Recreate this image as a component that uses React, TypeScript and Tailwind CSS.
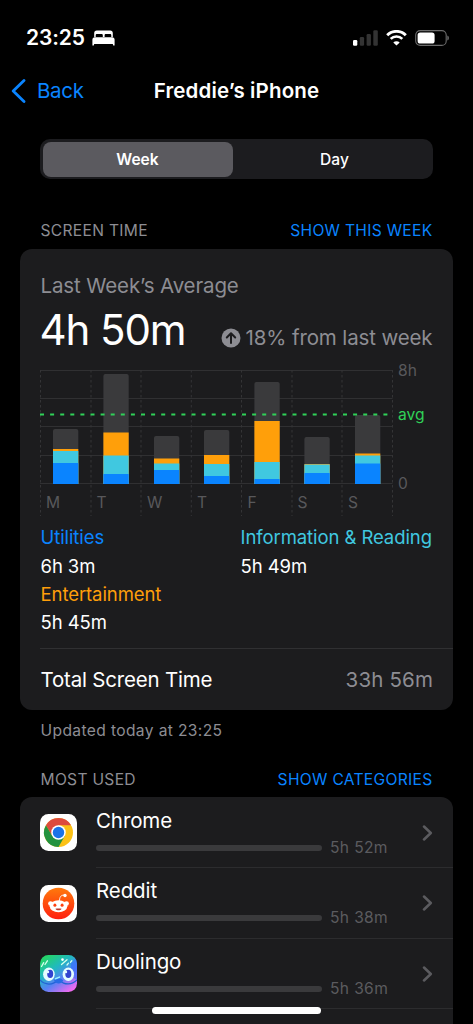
import { ReactNode } from 'react';

interface DayUsage {
  label: string;
  x: number;
  // y of the top edge of every segment, the bar stands on BASELINE
  other: number;
  entertainment: number;
  reading: number;
  utilities: number;
}

const BASELINE = 114;

const days: DayUsage[] = [
  { label: 'M', x: 13, other: 59, entertainment: 79, reading: 81, utilities: 93 },
  { label: 'T', x: 63.4, other: 4, entertainment: 62.5, reading: 85.5, utilities: 104 },
  { label: 'W', x: 114, other: 66, entertainment: 88.5, reading: 93.5, utilities: 100 },
  { label: 'T', x: 164, other: 60, entertainment: 85, reading: 94, utilities: 106 },
  { label: 'F', x: 214.4, other: 12, entertainment: 51, reading: 92, utilities: 109 },
  { label: 'S', x: 264.4, other: 67, entertainment: 94, reading: 94.5, utilities: 103 },
  { label: 'S', x: 315, other: 45, entertainment: 83.5, reading: 85.5, utilities: 93.5 },
];

function StatusBar() {
  return (
    <div className="flex h-[54px] items-end justify-between pr-[24px] pl-[26px] text-white">
      <div className="flex h-8 items-center gap-[7px]">
        <span className="text-[21px] font-semibold tracking-[-0.100px]">23:25</span>
        <svg width="23" height="16" viewBox="0 0 23 16" fill="currentColor">
          <path d="M2.200 7V3.200C2.200 1.500 3.100.6 4.800.6h13.400c1.700 0 2.600.9 2.600 2.600V7h-1.500V5.400c0-.9-.5-1.400-1.400-1.400h-3.900c-.9 0-1.400.5-1.400 1.400V7h-1.800V5.400c0-.9-.5-1.400-1.400-1.400H5.100c-.9 0-1.400.5-1.400 1.400V7z" />
          <path d="M.4 15.600V9.800C.4 8.200 1.300 7.300 2.900 7.300h17.200c1.600 0 2.500.9 2.500 2.500v5.800h-1.400l-.4-1.600H2.200l-.4 1.600z" />
        </svg>
      </div>
      <div className="flex h-8 items-center">
        <svg width="25" height="16" viewBox="0 0 25 16">
          <rect x="0" y="10" width="4.300" height="5.700" rx="1.200" fill="#fff" />
          <rect x="6.800" y="7" width="4.300" height="8.700" rx="1.200" fill="#333" />
          <rect x="13.600" y="4" width="4.300" height="11.700" rx="1.200" fill="#333" />
          <rect x="20.300" y="0.300" width="4.500" height="15.400" rx="1.200" fill="#333" />
        </svg>
        <svg className="ml-[8px]" width="21" height="16" viewBox="0 0 21 16" fill="none" stroke="#fff">
          <path d="M1.200 5.200a13.200 13.200 0 0 1 18.600 0" strokeWidth="2.900" />
          <path d="M4.700 8.900a8.200 8.200 0 0 1 11.600 0" strokeWidth="2.700" />
          <path d="M10.500 15.600L7.300 12.500a4.600 4.600 0 0 1 6.400 0z" fill="#fff" stroke="none" />
        </svg>
        <svg className="ml-[8px]" width="34" height="16" viewBox="0 0 34 16">
          <rect x="0.700" y="0.600" width="30.500" height="14.800" rx="4.500" fill="none" stroke="#6b6b6b" strokeWidth="1.100" />
          <rect x="2.600" y="2.500" width="17" height="11" rx="2.600" fill="#fff" />
          <path d="M32.300 5.600c1.200.5 1.600 1.300 1.600 2.400s-.4 1.900-1.600 2.400z" fill="#6b6b6b" />
        </svg>
      </div>
    </div>
  );
}

function NavBar() {
  return (
    <div className="grid h-[75px] grid-cols-[120px_1fr_120px] items-center">
      <button className="flex items-center gap-[11px] pl-[11px] text-[#0a84ff]">
        <svg className="-mt-[2px]" width="15" height="24" viewBox="0 0 15 24" fill="none" stroke="currentColor" strokeWidth="2.800" strokeLinecap="round" strokeLinejoin="round">
          <path d="M13 1.500L2.200 12 13 22.500" />
        </svg>
        <span className="text-[20.500px] tracking-[-0.300px]">Back</span>
      </button>
      <h1 className="text-center text-[20.500px] font-semibold tracking-[0.130px] whitespace-nowrap text-white">
        Freddie’s iPhone
      </h1>
    </div>
  );
}

function SegmentedControl() {
  return (
    <div className="mx-[40px] mt-[10px] grid h-10 grid-cols-[190px_1fr] rounded-[10px] bg-[#1c1c1f] p-[2.500px] text-[15.600px] text-white">
      <button className="rounded-[8px] bg-[#5b5a5f] pt-px font-semibold">Week</button>
      <button className="pt-px pl-[6px] font-medium">Day</button>
    </div>
  );
}

function SectionHeader({ title, action }: { title: string; action: ReactNode }) {
  return (
    <div className="flex items-center justify-between px-[40.500px] text-[15.600px] leading-5 tracking-[0.300px]">
      <h2 className="text-[#8d8d93]">{title}</h2>
      {action}
    </div>
  );
}

function UsageChart() {
  return (
    <svg className="block overflow-visible" width="393" height="146" viewBox="0 0 393 146" fontSize="15.600">
      {[0.5, 28.5, 56.5, 85.5, 113.5].map((y) => (
        <line key={y} x1="0" x2="352.500" y1={y} y2={y} stroke="#303032" />
      ))}
      {[0.5, 51, 101, 151.300, 201.500, 252, 302, 352.500].map((x) => (
        <line key={x} x1={x} x2={x} y1="0" y2="146" stroke="#343436" strokeDasharray="2.500 2.500" />
      ))}
      {days.map((day) => (
        <g key={day.x}>
          <path
            d={`M${day.x} ${BASELINE}V${day.other + 2}q0-2 2-2h21.300q2 0 2 2V${BASELINE}z`}
            fill="#3a3a3c"
          />
          <rect x={day.x} y={day.entertainment} width="25.300" height={BASELINE - day.entertainment} fill="#ff9f0a" />
          <rect x={day.x} y={day.reading} width="25.300" height={BASELINE - day.reading} fill="#40c8e0" />
          <rect x={day.x} y={day.utilities} width="25.300" height={BASELINE - day.utilities} fill="#0a84ff" />
          <text x={day.x - 7} y="138" fill="#58585b">
            {day.label}
          </text>
        </g>
      ))}
      <line x1="0" x2="350" y1="44.500" y2="44.500" stroke="#30d158" strokeWidth="2" strokeDasharray="4 6.100" />
      <text x="358" y="6" fill="#58585b">8h</text>
      <text x="358" y="50" fill="#30d158">avg</text>
      <text x="358" y="119" fill="#58585b">0</text>
    </svg>
  );
}

function LegendItem({ name, time, color }: { name: string; time: string; color: string }) {
  return (
    <div className="text-[18.500px] leading-[28.200px] tracking-[-0.080px]">
      <div className={`whitespace-nowrap ${color}`}>{name}</div>
      <div className="text-white">{time}</div>
    </div>
  );
}

function SummaryCard() {
  return (
    <div className="mx-[20px] mt-[8px] h-[461px] rounded-[12px] bg-[#1c1c1e]">
      <div className="h-[399px] px-[20.500px] pt-[23px]">
        <p className="text-[20.500px] leading-7 tracking-[-0.130px] text-[#8d8d93]">Last Week’s Average</p>
        <div className="flex h-[70px] items-start justify-between">
          <span className="mt-[6px] -ml-[1px] text-[42px] leading-[48px] tracking-[-1.100px] text-white">4h 50m</span>
          <span className="mt-[24px] flex items-center gap-[5px] text-[20.500px] leading-7 tracking-[-0.130px] text-[#8d8d93]">
            <svg width="20" height="20" viewBox="0 0 20 20">
              <circle cx="10" cy="10" r="9.500" fill="#8d8d93" />
              <path d="M10 15V5.500M5.800 9.500L10 5.300l4.200 4.200" fill="none" stroke="#1c1c1e" strokeWidth="2" strokeLinecap="round" strokeLinejoin="round" />
            </svg>
            18% from last week
          </span>
        </div>
        <div className="-ml-[0.500px]">
          <UsageChart />
        </div>
        <div className="mt-[7.400px] grid grid-cols-[200px_1fr]">
          <LegendItem name="Utilities" time="6h 3m" color="text-[#0a84ff]" />
          <LegendItem name="Information & Reading" time="5h 49m" color="text-[#40c8e0]" />
          <LegendItem name="Entertainment" time="5h 45m" color="text-[#ff9f0a]" />
        </div>
      </div>
      <div className="ml-[20px] flex h-[62px] items-center justify-between border-t border-[#303032] pt-px pr-[20px] pl-[0.500px] text-[20.500px] tracking-[-0.200px]">
        <span className="text-white">Total Screen Time</span>
        <span className="tracking-[0.150px] text-[#8d8d93]">33h 56m</span>
      </div>
    </div>
  );
}

function ChromeIcon() {
  return (
    <svg width="37" height="37" viewBox="0 0 37 37">
      <rect width="37" height="37" rx="8.500" fill="#fff" />
      <circle cx="18.500" cy="18.500" r="14.500" fill="#fbc116" />
      <path d="M5.940 11.250A14.500 14.500 0 0 1 31.060 11.250H18.500L12.220 22.120z" fill="#dd4b3e" />
      <path d="M5.940 11.250A14.500 14.500 0 0 0 18.500 33L24.780 22.120 12.220 22.120z" fill="#23923f" />
      <circle cx="18.500" cy="18.500" r="7.250" fill="#fff" />
      <circle cx="18.500" cy="18.500" r="5.700" fill="#1a73e8" />
    </svg>
  );
}

function RedditIcon() {
  return (
    <svg width="37" height="37" viewBox="0 0 37 37">
      <defs>
        <linearGradient id="reddit" x1="0" y1="0" x2="0" y2="1">
          <stop offset="0" stopColor="#ff7a0c" />
          <stop offset="1" stopColor="#ff1f10" />
        </linearGradient>
      </defs>
      <rect width="37" height="37" rx="8.500" fill="#fff" />
      <circle cx="18.500" cy="18.500" r="15.800" fill="url(#reddit)" />
      <path d="M19.500 16.500c0-4 .8-6.400 4.600-6.400" fill="none" stroke="#fff" strokeWidth="0.900" />
      <circle cx="25" cy="10.500" r="1.700" fill="#fff" />
      <circle cx="10.500" cy="18.600" r="2.400" fill="#fff" />
      <circle cx="26.500" cy="18.600" r="2.400" fill="#fff" />
      <ellipse cx="18.500" cy="21.200" rx="8.800" ry="6" fill="#fff" />
      <ellipse cx="14.900" cy="20.200" rx="1.500" ry="1.600" fill="#ff4010" />
      <ellipse cx="22.100" cy="20.200" rx="1.500" ry="1.600" fill="#ff4010" />
      <path d="M15.400 23.700c2-.4 4.200-.4 6.200 0-1.200 2.100-5 2.100-6.200 0z" fill="#b9372a" />
    </svg>
  );
}

function DuolingoIcon() {
  return (
    <svg width="37" height="37" viewBox="0 0 37 37">
      <defs>
        <linearGradient id="duo" x1="0.150" y1="0" x2="0.850" y2="1">
          <stop offset="0.050" stopColor="#25d36c" />
          <stop offset="0.350" stopColor="#20b9c0" />
          <stop offset="0.620" stopColor="#5682f5" />
          <stop offset="0.960" stopColor="#ed6af0" />
        </linearGradient>
        <clipPath id="duoClip">
          <rect width="37" height="37" rx="8.500" />
        </clipPath>
      </defs>
      <g clipPath="url(#duoClip)">
        <rect width="37" height="37" fill="url(#duo)" />
        <path d="M37 2v23l-6-4V8z" fill="#3769ff" opacity="0.600" />
        <path d="M0 25c5 5.500 13 5.200 17 .5M20 25.500c4 4.500 12 4.800 17-.5" fill="none" stroke="#2363d5" strokeWidth="1.200" />
        <path d="M14 25.500c2.500-3 7-3 9.200 0-1.700 4-7.300 4-9.200 0z" fill="#276be5" />
        <path d="M15.500 23.800l4-1.700" stroke="#9af3ff" strokeWidth="1.500" strokeLinecap="round" />
        <ellipse cx="8.900" cy="19.300" rx="5.800" ry="6.800" fill="#e4fdff" />
        <ellipse cx="28.300" cy="19.300" rx="5.700" ry="6.800" fill="#e4fdff" />
        <ellipse cx="10.200" cy="18.900" rx="3" ry="4.100" fill="#3243d0" />
        <ellipse cx="28.300" cy="18.900" rx="3" ry="4.100" fill="#3243d0" />
        <circle cx="8" cy="17" r="1.200" fill="#e4fdff" />
        <circle cx="26" cy="17" r="1.200" fill="#e4fdff" />
        <path d="M1.500 11.500l2.200-3.800M5 9.500l2.400-3.700M21.500 9.500l5.500-4.800M27 10l1.500-1.800M30.500 7.300l1.300-1.500" fill="none" stroke="#d6ffec" strokeWidth="1.300" strokeLinecap="round" />
        <circle cx="22.500" cy="4.600" r="1.300" fill="#fff" />
      </g>
    </svg>
  );
}

interface AppRowProps {
  icon: ReactNode;
  name: string;
  time: string;
}

function AppRow({ icon, name, time }: AppRowProps) {
  return (
    <div className="flex h-[70.600px] pl-[20px]">
      <div className="flex w-[56px] items-center">{icon}</div>
      <div className="flex flex-1 items-center justify-between border-b border-[#2c2c2e] pr-[20px]">
        <div className="flex h-full flex-col pt-[9.500px]">
          <span className="text-[20.500px] leading-7 tracking-[-0.100px] text-white">{name}</span>
          <div className="mt-[3px] flex items-center gap-[8px] leading-5">
            <div className="h-[6px] w-[226px] rounded-full bg-[#3a3a3c]" />
            <span className="text-[15.600px] tracking-[0.350px] text-[#5b5b5f]">{time}</span>
          </div>
        </div>
        <svg className="mt-px" width="11" height="16" viewBox="0 0 11 16" fill="none" stroke="#5b5b5f" strokeWidth="2.500" strokeLinecap="round" strokeLinejoin="round">
          <path d="M2 1.500L8.800 8 2 14.500" />
        </svg>
      </div>
    </div>
  );
}

export default function App() {
  return (
    <div className="relative h-[1024px] w-[473px] overflow-hidden bg-black font-['Inter','Liberation_Sans',sans-serif]">
      <StatusBar />
      <NavBar />
      <SegmentedControl />
      <div className="mt-[42px]">
        <SectionHeader title="SCREEN TIME" action={<button className="text-[#0a84ff]">SHOW THIS WEEK</button>} />
      </div>
      <SummaryCard />
      <p className="mt-[10.500px] px-[40.500px] text-[15.600px] leading-5 tracking-[0.370px] text-[#8d8d93]">
        Updated today at 23:25
      </p>
      <div className="mt-[29px]">
        <SectionHeader title="MOST USED" action={<button className="text-[#0a84ff]">SHOW CATEGORIES</button>} />
      </div>
      <div className="mx-[20px] mt-[7.900px] h-[260px] rounded-t-[12px] bg-[#1c1c1e]">
        <AppRow icon={<ChromeIcon />} name="Chrome" time="5h 52m" />
        <AppRow icon={<RedditIcon />} name="Reddit" time="5h 38m" />
        <AppRow icon={<DuolingoIcon />} name="Duolingo" time="5h 36m" />
      </div>
      <div className="absolute bottom-[10px] left-[152px] h-[7px] w-[169px] rounded-full bg-white" />
    </div>
  );
}
